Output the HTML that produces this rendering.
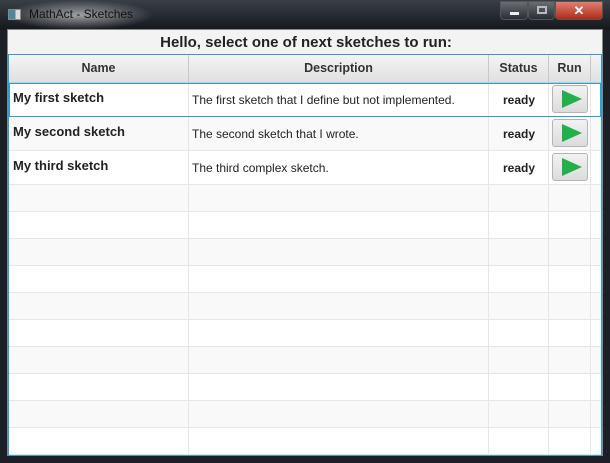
<!DOCTYPE html>
<html><head><style>
*{margin:0;padding:0;box-sizing:border-box}
body{width:610px;height:463px;overflow:hidden;background:#1c2026;font-family:"Liberation Sans",sans-serif;position:relative}
.tb{position:absolute;left:0;top:0;width:610px;height:30px;background:linear-gradient(#3a3f46,#14181d)}
.glow{position:absolute;left:4px;top:0px;width:150px;height:30px;background:radial-gradient(ellipse at center,rgba(210,210,210,.7),rgba(200,200,200,0) 70%)}
.title{position:absolute;left:29px;top:7px;font-size:12px;color:#111}
.ico{position:absolute;left:8px;top:9px;width:13px;height:11px;background:linear-gradient(90deg,#4a8a9a 0 60%,#ddd 60%);border:1px solid #888}
.btn{position:absolute;top:1px;height:19px;border:1px solid #555;border-radius:0 0 4px 4px;background:linear-gradient(#6a6e74,#2a2e34)}
.cont{position:absolute;left:7px;top:29px;width:596px;height:427px;background:#f3f3f3;border:1px solid #888}
h1{position:absolute;left:0;width:596px;top:4px;text-align:center;font-size:15px;font-weight:bold;color:#222}
.tbl{position:absolute;left:8px;top:54px;width:594px;height:402px;border:1px solid #29a0d8;background:#fff;overflow:hidden}
.hdr{position:absolute;left:0;top:0;width:592px;height:28px;background:linear-gradient(#f4f4f4,#e0e0e0);border-bottom:1px solid #c8c8c8}
.hdr div{position:absolute;top:0;height:27px;line-height:27px;text-align:center;font-size:12.5px;font-weight:bold;color:#333;border-right:1px solid #c8c8c8}
.row{position:absolute;left:0;width:592px;border-bottom:1px solid #e6e6e6}
.vl{position:absolute;top:28px;bottom:0;width:1px;background:#e6e6e6}
.c{position:absolute;font-size:12px;color:#222}
.b{font-weight:bold}
.n{font-size:13px}
.play{position:absolute;left:543px;width:36px;height:28px;border:1px solid #b5b5b5;border-radius:3px;background:linear-gradient(#f2f2f2,#dcdcdc)}
.play:after{content:"";position:absolute;left:9px;top:4px;border-left:20px solid #22b04a;border-top:9px solid transparent;border-bottom:9px solid transparent}
</style></head><body>
<div class="tb"><div class="glow"></div><div class="ico"></div><div class="title">MathAct - Sketches</div>
<div class="btn" style="left:500px;width:28px"><div style="position:absolute;left:9px;top:10px;width:9px;height:3px;background:#eee"></div></div>
<div class="btn" style="left:528px;width:27px"><div style="position:absolute;left:8px;top:4px;width:10px;height:8px;border:2px solid #bbb"></div></div>
<div class="btn" style="left:555px;width:48px;background:linear-gradient(#e08070,#b02a18);color:#fff;text-align:center;font-weight:bold;font-size:13px;line-height:17px">✕</div>
</div>
<div class="cont"><h1>Hello, select one of next sketches to run:</h1></div>
<div class="tbl">
<div class="row" style="top:28px;height:34px;background:#fff"></div>
<div class="row" style="top:62px;height:34px;background:#f9f9f9"></div>
<div class="row" style="top:96px;height:34px;background:#fff"></div>
<div class="row" style="top:130px;height:27px;background:#f9f9f9"></div>
<div class="row" style="top:157px;height:27px"></div>
<div class="row" style="top:184px;height:27px;background:#f9f9f9"></div>
<div class="row" style="top:211px;height:27px"></div>
<div class="row" style="top:238px;height:27px;background:#f9f9f9"></div>
<div class="row" style="top:265px;height:27px"></div>
<div class="row" style="top:292px;height:27px;background:#f9f9f9"></div>
<div class="row" style="top:319px;height:27px"></div>
<div class="row" style="top:346px;height:27px;background:#f9f9f9"></div>
<div class="row" style="top:373px;height:27px"></div>
<div class="vl" style="left:179px"></div><div class="vl" style="left:479px"></div><div class="vl" style="left:539px"></div><div class="vl" style="left:581px"></div>
<div style="position:absolute;left:0;top:28px;width:592px;height:34px;border:1px solid #29a0d8"></div>
<div class="hdr">
<div style="left:0;width:180px">Name</div><div style="left:180px;width:300px">Description</div><div style="left:480px;width:60px">Status</div><div style="left:540px;width:42px">Run</div>
</div>
<div class="c b n" style="left:4px;top:35px">My first sketch</div>
<div class="c" style="left:183px;top:38px">The first sketch that I define but not implemented.</div>
<div class="c b" style="left:494px;top:38px">ready</div>
<div class="play" style="top:30px"></div>
<div class="c b n" style="left:4px;top:69px">My second sketch</div>
<div class="c" style="left:183px;top:72px">The second sketch that I wrote.</div>
<div class="c b" style="left:494px;top:72px">ready</div>
<div class="play" style="top:64px"></div>
<div class="c b n" style="left:4px;top:103px">My third sketch</div>
<div class="c" style="left:183px;top:106px">The third complex sketch.</div>
<div class="c b" style="left:494px;top:106px">ready</div>
<div class="play" style="top:98px"></div>
</div>
</body></html>
